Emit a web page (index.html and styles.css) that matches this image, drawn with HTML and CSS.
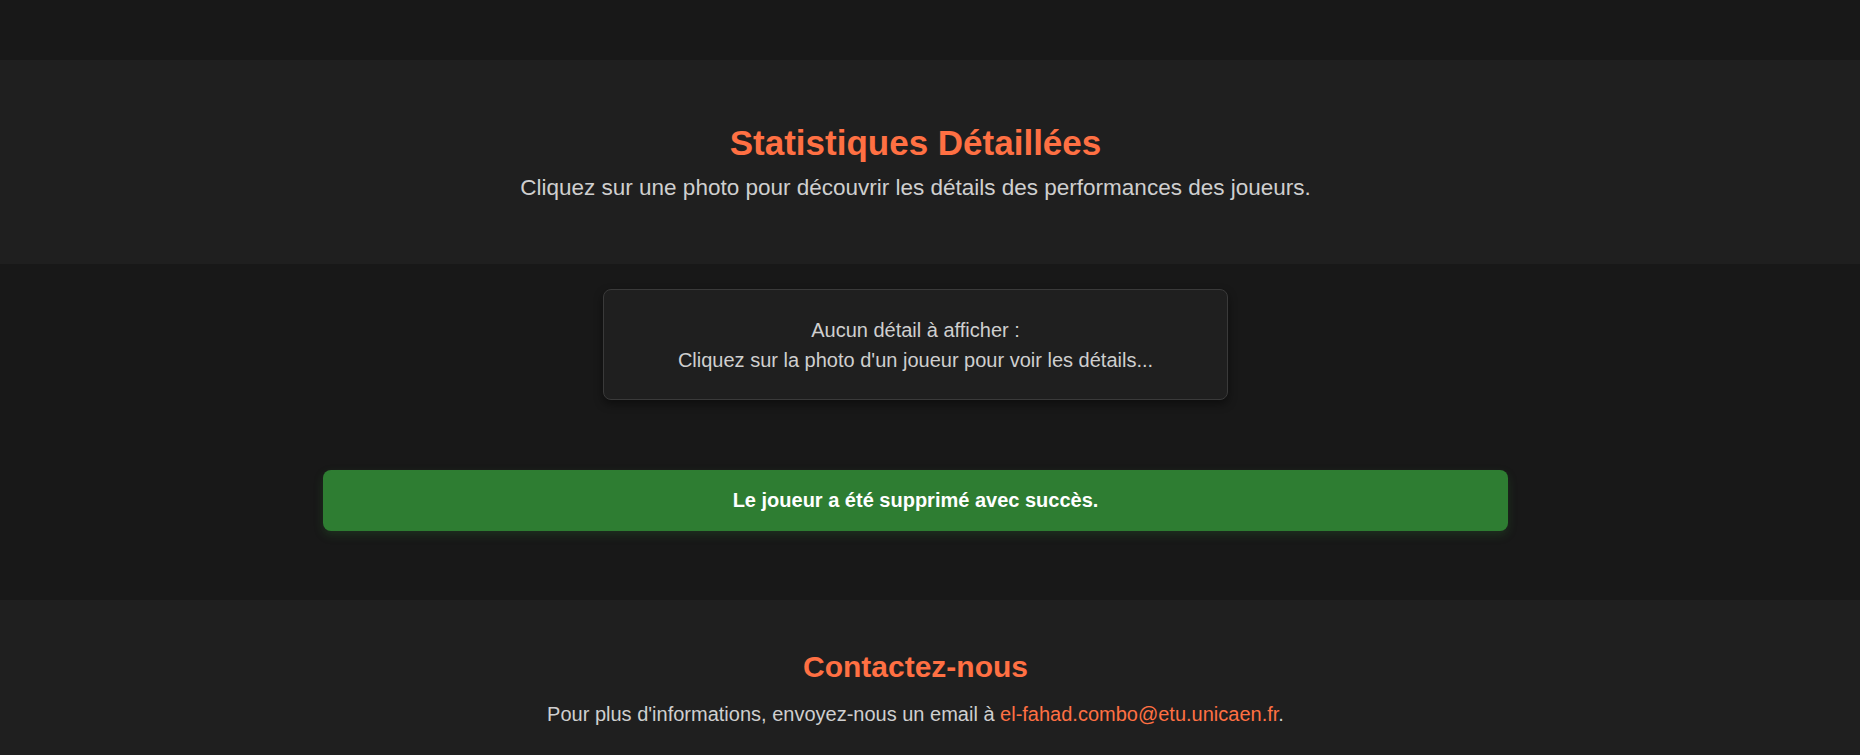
FILE: index.html
```html
<!DOCTYPE html>
<html lang="fr">
<head>
<meta charset="utf-8">
<title>Statistiques Détaillées</title>
<link rel="stylesheet" href="styles.css">
</head>
<body>
<section class="hero">
  <div class="inner">
    <h1 class="hero-title">Statistiques Détaillées</h1>
    <p class="hero-sub">Cliquez sur une photo pour découvrir les détails des performances des joueurs.</p>
  </div>
</section>
<main class="main">
  <div class="inner">
    <div class="details-box">
      <p>Aucun détail à afficher :<br>Cliquez sur la photo d'un joueur pour voir les détails...</p>
    </div>
    <div class="alert-success">Le joueur a été supprimé avec succès.</div>
  </div>
</main>
<footer class="footer">
  <div class="inner">
    <h2 class="footer-title">Contactez-nous</h2>
    <p class="footer-text">Pour plus d'informations, envoyez-nous un email à <a class="mail" href="#">el-fahad.combo@etu.unicaen.fr</a>.</p>
  </div>
</footer>
</body>
</html>
```
FILE: styles.css
```css
* { box-sizing: border-box; }
html, body { margin: 0; padding: 0; }
body {
  background: #181818;
  color: #cfcfcf;
  font-family: "Liberation Sans", Arial, sans-serif;
  font-size: 20px;
  overflow: hidden;
}
.inner {
  margin-right: 29px;
  text-align: center;
}
.hero {
  margin-top: 60px;
  background: #1f1f1f;
  padding: 63px 20px 63px;
}
.hero-title {
  margin: 0 0 12px;
  font-size: 35px;
  font-weight: bold;
  color: #ff7043;
}
.hero-sub {
  margin: 0;
  font-size: 22.5px;
  color: #cfcfcf;
}
.main {
  padding: 25px 0 69px;
}
.details-box {
  width: 625px;
  margin: 0 auto;
  background: #1f1f1f;
  border: 1px solid #3a3a3a;
  border-radius: 8px;
  padding: 25px 20px 24px;
  box-shadow: 0 4px 10px rgba(0, 0, 0, 0.45);
}
.details-box p {
  margin: 0;
  line-height: 30px;
  color: #cfcfcf;
}
.alert-success {
  width: 1185px;
  margin: 70px auto 0;
  background: #2e7d32;
  color: #ffffff;
  font-weight: bold;
  border-radius: 8px;
  padding: 19px 20px;
  line-height: 23px;
  box-shadow: 0 4px 10px rgba(46, 125, 50, 0.25);
}
.footer {
  background: #1f1f1f;
  padding: 50px 20px 30px;
}
.footer-title {
  margin: 0 0 19px;
  font-size: 30px;
  font-weight: bold;
  color: #ff7043;
}
.footer-text {
  margin: 0;
  color: #cfcfcf;
}
.mail {
  color: #ff7043;
  text-decoration: none;
}
```
